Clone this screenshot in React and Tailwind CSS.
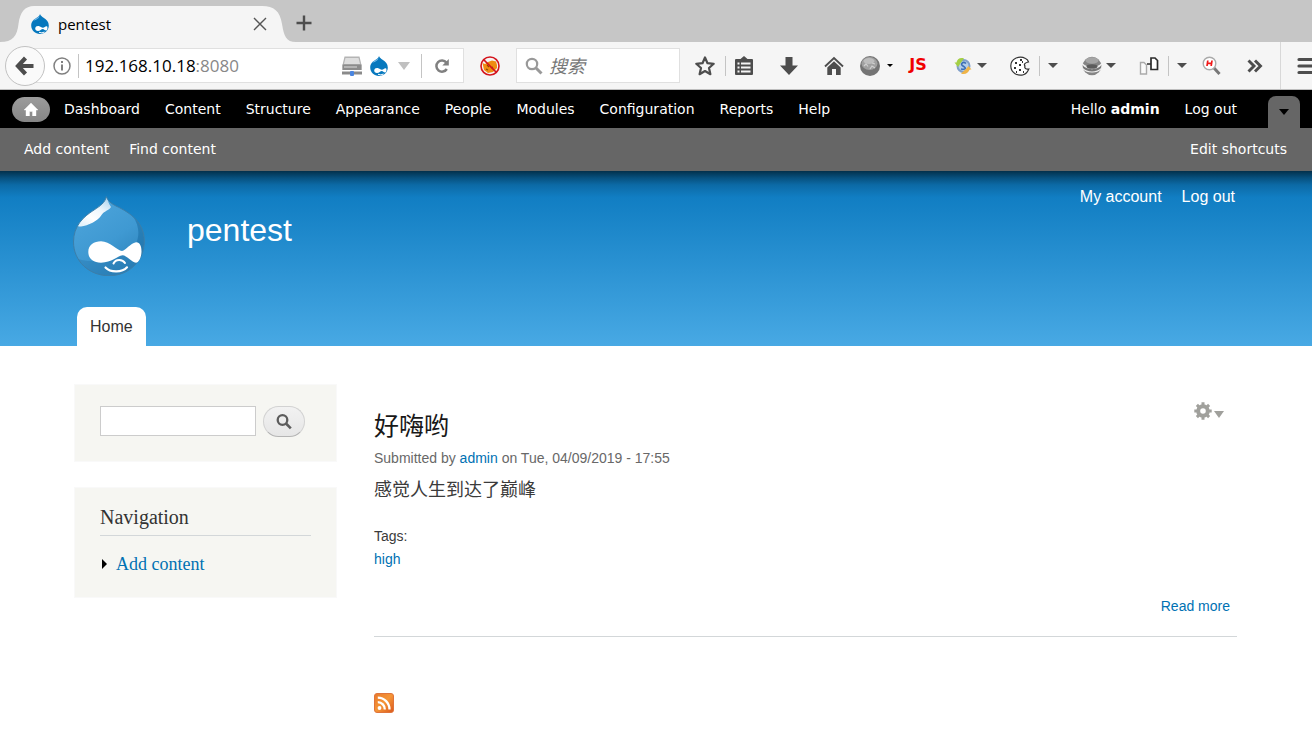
import React from "react";

function Favicon({ className }) {
  return (
    <svg viewBox="0 0 20 20" className={className} aria-hidden="true">
      <path d="M10 0C10.600 1.600 12 2.800 13.600 3.700C16.600 5.400 18.800 7.800 18.800 11.600C18.800 16.400 14.900 20 10 20C5.100 20 1.200 16.400 1.200 11.600C1.200 7.800 3.600 5.600 6.200 4C8 2.900 9.700 1.800 10 0Z" fill="#0678be" />
      <path d="M3 7C4.600 4.600 7.500 4.600 9.500 2C9 5 5.400 5.800 3 7Z" fill="#7cbdeb" />
      <path d="M5.200 14.600C5.200 12.400 7 11.800 8.600 12C10.600 12.300 11.700 13.800 13 13.700C14.500 13.500 15.200 12 16.800 12.200C18 12.500 17.600 16.400 16 16.600C14.600 16.600 14 15 12.800 15C11.200 15 10.400 17.100 8 17.100C6.300 17.100 5.200 16.100 5.200 14.600Z" fill="#fff" />
      <path d="M9 18.300Q12 19.600 14.500 18" stroke="#fff" strokeWidth="1" fill="none" />
    </svg>
  );
}

function SiteLogo() {
  return (
    <svg viewBox="0 0 72 80" className="h-20 w-[72px]" aria-hidden="true">
      <defs>
        <linearGradient id="drop" x1="0.200" y1="0" x2="0.800" y2="1">
          <stop offset="0.100" stopColor="#4ba3da" />
          <stop offset="0.550" stopColor="#3f99d2" />
          <stop offset="1" stopColor="#2a80b8" />
        </linearGradient>
        <linearGradient id="shine" x1="0.900" y1="0" x2="0.200" y2="1">
          <stop offset="0" stopColor="#a9d2ee" />
          <stop offset="0.400" stopColor="#eef7fd" />
          <stop offset="0.700" stopColor="#ffffff" />
          <stop offset="1" stopColor="#e3f2fb" />
        </linearGradient>
        <clipPath id="dropShape">
          <path d="M33.300 0.600C35 5 38 7.500 43 10C58 17 71.300 27 71.300 45C71.300 65 56 79.700 36 79.700C16 79.700 0.500 65 0.500 46C0.500 30 10 21 21 14C27 10 32 7 33.300 0.600Z" />
        </clipPath>
      </defs>
      <g clipPath="url(#dropShape)">
        <rect width="72" height="80" fill="url(#drop)" />
        <path d="M60 20C78 36 76 64 66 68C62 62 60 58 63 48C67 38 66 30 60 20Z" fill="#1c70a6" opacity="0.600" />
        <path d="M0 61C10 66 30 68 50 57L72 52V80H0Z" fill="#2172a9" opacity="0.350" />
        <path d="M33.500 1C30 9 14 14 8 21C4 26 3 31.500 8 30.500C15 29.500 25 25 28.500 19C31 15 36 14.500 38 11C36 8 35 5 33.500 1Z" fill="url(#shine)" />
      </g>
      <path d="M33.300 0.600C35 5 38 7.500 43 10C58 17 71.300 27 71.300 45C71.300 65 56 79.700 36 79.700C16 79.700 0.500 65 0.500 46C0.500 30 10 21 21 14C27 10 32 7 33.300 0.600Z" fill="none" stroke="#3d7ea8" strokeWidth="1" />
      <path d="M15.300 56C15.300 49 21 45.300 28 45.300C37 45.300 44 54.500 49 55C53 54.500 57 47.500 63 46.300C67 46 68.700 51 68.500 56C68.200 61 66 66.700 63 66.700C58 66 54 59.500 49.500 59.300C44 60 39 66.700 28 66.700C20 66.700 15.300 62.500 15.300 56Z" fill="#fff" />
      <path d="M40.500 67.500C42.500 62.800 49.500 62.800 52 67" fill="none" stroke="#fff" strokeWidth="2" strokeLinecap="round" />
      <path d="M32.500 71.500C37 76.500 49 77 54 71.300" fill="none" stroke="#fff" strokeWidth="2.200" strokeLinecap="round" />
    </svg>
  );
}

function Caret({ className }) {
  return (
    <svg viewBox="0 0 10 5" preserveAspectRatio="none" className={className} aria-hidden="true">
      <path d="M0 0H10L5 5Z" fill="currentColor" />
    </svg>
  );
}

function Tool({ label, className, children }) {
  return (
    <button type="button" aria-label={label} className={`shrink-0 ${className}`}>
      {children}
    </button>
  );
}

function Divider({ className }) {
  return <span className={`w-px shrink-0 bg-[#c4c4c4] ${className}`} />;
}

function TabStrip() {
  return (
    <div className="flex h-[42px] items-end bg-[#c6c6c6]">
      <div className="flex h-9 items-end">
        <svg viewBox="0 0 34 36" className="h-9 w-[34px] shrink-0" aria-hidden="true">
          <path d="M0 36C13 36 17 30 18.500 18C20 6 25 0 34 0V36Z" fill="#f5f5f5" />
        </svg>
        <div className="relative z-10 flex h-9 w-[228px] items-center bg-[#f5f5f5]">
          <Favicon className="-ml-1 size-5" />
          <span className="ml-2 flex-1 text-[15px] text-black">pentest</span>
          <button type="button" aria-label="Close tab" className="-mr-[5px]">
            <svg viewBox="0 0 14 14" className="size-[14px]" aria-hidden="true">
              <path d="M1 1L13 13M13 1L1 13" stroke="#555" strokeWidth="1.400" />
            </svg>
          </button>
        </div>
        <svg viewBox="0 0 34 36" className="h-9 w-[34px] shrink-0" aria-hidden="true">
          <path d="M0 0C12 0 18 5 20 18C22 30 24 36 34 36H0Z" fill="#f5f5f5" />
        </svg>
      </div>
      <button type="button" aria-label="New tab" className="mb-[11px]">
        <svg viewBox="0 0 16 16" className="size-4" aria-hidden="true">
          <path d="M8 0.500V15.500M0.500 8H15.500" stroke="#4d4d4d" strokeWidth="2.400" />
        </svg>
      </button>
    </div>
  );
}

function AddressBar() {
  return (
    <div className="flex min-w-0 flex-1 items-center pl-[5px]">
      <button type="button" aria-label="Back" className="relative z-10 flex size-10 shrink-0 items-center justify-center rounded-full border border-[#c2c2c2] bg-[#fafafa]">
        <svg viewBox="0 0 20 20" className="size-5" aria-hidden="true">
          <path d="M10.500 2L3 10L10.500 18M3.500 10H18.500" stroke="#4d4d4d" strokeWidth="4.200" fill="none" />
        </svg>
      </button>
      <div className="-ml-5 flex h-[35px] min-w-0 flex-1 items-center border border-[#e0e0e0] bg-white pl-[27px]">
        <svg viewBox="0 0 18 18" className="size-[18px] shrink-0" aria-hidden="true">
          <circle cx="9" cy="9" r="8" fill="none" stroke="#808080" strokeWidth="1.500" />
          <path d="M9 4V6M9 7.500V13.500" stroke="#808080" strokeWidth="2" />
        </svg>
        <Divider className="ml-[7px] h-6" />
        <div className="ml-[6px] min-w-0 flex-1 text-[17px] text-black">
          192.168.10.18<span className="text-[#888]">:8080</span>
        </div>
        <svg viewBox="0 0 20 20" className="size-5 shrink-0" aria-hidden="true">
          <path d="M2.500 0.500H17.500L19.500 9V14H0.500V9Z" fill="#b4b4b4" />
          <path d="M3.500 2H16.500L18 8H2Z" fill="#dedede" />
          <path d="M0.500 8.500H19.500V14H0.500Z" fill="#8c8c8c" />
          <path d="M2 11H15" stroke="#dcdcdc" />
          <path d="M0 17H20" stroke="#8a8a8a" strokeWidth="3" />
          <rect x="8" y="15" width="4" height="5" rx="1" fill="#4a85df" />
        </svg>
        <Favicon className="ml-[7px] size-5 shrink-0" />
        <Caret className="ml-[9px] h-2 w-3 shrink-0 text-[#c0c0c0]" />
        <Divider className="ml-[11px] h-6" />
        <button type="button" aria-label="Reload" className="ml-3 mr-[13px]">
          <svg viewBox="0 0 16 16" className="size-4" aria-hidden="true">
            <path d="M12.800 11A5.600 5.600 0 1 1 12.400 4.600" stroke="#808080" strokeWidth="2.500" fill="none" />
            <path d="M14.800 1V7.500H8.300Z" fill="#808080" />
          </svg>
        </button>
      </div>
    </div>
  );
}

function BrowserToolbar() {
  return (
    <div className="flex h-12 items-center overflow-hidden border-b border-[#bebebe] bg-[#f5f5f5] text-[#4d4d4d]">
      <AddressBar />
      <Tool label="Extension" className="mx-4">
        <svg viewBox="0 0 20 20" className="size-5" aria-hidden="true">
          <path d="M2.500 7L5 8L8 6L12 4.500L16 5.500L17 9V12L13 16L8 17L4 14Z" fill="#ef8c12" />
          <path d="M7 9L9 11M11 12L13 11M6 13L8 14" stroke="#8d4a08" strokeWidth="1.200" />
          <circle cx="10" cy="10" r="9" fill="none" stroke="#d4141c" strokeWidth="1.600" />
          <path d="M3.500 3.500L16.500 16.500" stroke="#d4141c" strokeWidth="1.700" />
        </svg>
      </Tool>
      <div className="flex h-[35px] w-[164px] shrink-0 items-center border border-[#e0e0e0] bg-white">
        <svg viewBox="0 0 18 18" className="ml-2 size-[18px] shrink-0" aria-hidden="true">
          <circle cx="7" cy="7" r="5.200" fill="none" stroke="#999" strokeWidth="2.200" />
          <path d="M11 11L16.500 16.500" stroke="#999" strokeWidth="3" />
        </svg>
        <input aria-label="Search the web" placeholder="搜索" className="ml-[6px] w-32 bg-transparent text-lg italic outline-none placeholder:text-[#777]" />
      </div>
      <Tool label="Bookmark" className="ml-[15px]">
        <svg viewBox="0 0 20 20" className="size-5" aria-hidden="true">
          <path d="M10 1.500L12.500 7.200L18.700 7.800L14 12L15.400 18.200L10 15L4.600 18.200L6 12L1.300 7.800L7.500 7.200Z" fill="none" stroke="currentColor" strokeWidth="2.200" strokeLinejoin="round" />
        </svg>
      </Tool>
      <Divider className="ml-[10px] h-5" />
      <Tool label="Library" className="ml-2">
        <svg viewBox="0 0 20 20" className="size-5" aria-hidden="true">
          <path d="M2 3H6.500L10 0L13.500 3H18Q19 3 19 4V18Q19 19 18 19H2Q1 19 1 18V4Q1 3 2 3Z" fill="currentColor" />
          <path d="M3.500 7.500H5.500M3.500 11.500H5.500M3.500 15.500H5.500M7 7.500H16.500M7 11.500H16.500M7 15.500H16.500" stroke="#f5f5f5" strokeWidth="2" />
        </svg>
      </Tool>
      <Tool label="Downloads" className="ml-[25px]">
        <svg viewBox="0 0 20 20" className="size-5" aria-hidden="true">
          <path d="M6.500 1H13.500V9.500H19L10 19L1 9.500H6.500Z" fill="currentColor" />
        </svg>
      </Tool>
      <Tool label="Home page" className="ml-[25px]">
        <svg viewBox="0 0 20 20" className="size-5" aria-hidden="true">
          <path d="M1 10.500L10 2L19 10.500" fill="none" stroke="currentColor" strokeWidth="1.900" />
          <path d="M10 5.300L16.700 11.500V19H12V13H8V19H3.300V11.500Z" fill="currentColor" />
        </svg>
      </Tool>
      <Tool label="Proxy" className="ml-4">
        <svg viewBox="0 0 20 20" className="size-5" aria-hidden="true">
          <circle cx="10" cy="10" r="10" fill="#747474" />
          <ellipse cx="9.500" cy="7.500" rx="8" ry="6.500" fill="#a0a0a0" />
          <ellipse cx="9" cy="5" rx="5.500" ry="3" fill="#bdbdbd" />
          <path d="M4 10L6 8L8 10.500M10 13L12 10L15 12M12 7L15 8" stroke="#cfcfcf" strokeWidth="1.200" fill="none" />
        </svg>
      </Tool>
      <Caret className="ml-[7px] h-[3px] w-[6px] shrink-0 text-black" />
      <Tool label="JavaScript" className="ml-[14px] w-[22px] pb-[2px] text-base font-bold leading-5 text-[#f00000]">
        <span className="font-['DejaVu_Sans',sans-serif]">JS</span>
      </Tool>
      <Tool label="Sync" className="ml-6">
        <svg viewBox="0 0 20 20" className="size-5" aria-hidden="true">
          <circle cx="10.500" cy="10" r="6" fill="#b3cde8" stroke="#7f9fc9" strokeWidth="2" />
          <path d="M13 7.500C10 5 6.500 8 10 10S13 14 8 13" fill="none" stroke="#3d6fb5" strokeWidth="1.600" />
          <path d="M11 2.500C7 1 4 3.500 3.500 6.500H1.500L5 11L8 6.500" fill="#a4cf45" />
          <path d="M8 17.500C12 19 15.500 17 16.500 13.500L18.500 13.500L15.500 10L12.500 13.500" fill="#efb447" />
        </svg>
      </Tool>
      <Caret className="ml-1 h-[5px] w-[10px] shrink-0" />
      <Tool label="Cookies" className="ml-[23px]">
        <svg viewBox="0 0 20 20" className="size-5" aria-hidden="true">
          <path d="M15.500 2.500C9 -1 0.700 3 0.800 10C0.900 17 8 20.500 13.500 18.700C17 17.500 18 15 18.800 13C16 13.500 14 12 15 10C13.500 8.500 15 6.500 18.500 6C18 4 17 3.200 15.500 2.500Z" fill="#fff" stroke="#333" strokeWidth="1.200" />
          <path d="M5 7H7M10 4H12M9 9H11M4 12H6M9 14H11M13 16H14M6 16H7M12 6H13" stroke="#333" strokeWidth="1.800" />
        </svg>
      </Tool>
      <Divider className="ml-[9px] h-5" />
      <Caret className="ml-2 h-[5px] w-[10px] shrink-0" />
      <Tool label="User agent" className="ml-6">
        <svg viewBox="0 0 20 20" className="size-5" aria-hidden="true">
          <circle cx="10" cy="10" r="9.300" fill="#858585" />
          <ellipse cx="10" cy="4.500" rx="6.500" ry="3.200" fill="#a5a5a5" />
          <path d="M0 6.500C3 10 6 11 10 11S17 10 20 6.500V13C17 15.500 14 16.500 10 16.500S3 15.500 0 13Z" fill="#f0f0f0" />
          <path d="M0.500 9C4 14.500 16 14.500 19.500 9L19 12C15 16.500 5 16.500 1 12Z" fill="#777" />
          <ellipse cx="10" cy="10.500" rx="5.500" ry="2.300" fill="#5c5c5c" />
        </svg>
      </Tool>
      <Caret className="ml-1 h-[5px] w-[10px] shrink-0" />
      <Tool label="Session" className="ml-[23px]">
        <svg viewBox="0 0 20 20" className="size-5" aria-hidden="true">
          <path d="M1.500 6.500H5L7.500 9V18H1.500Z" fill="#fafafa" stroke="#aaa" strokeWidth="1.400" />
          <path d="M12 2H16L18.500 4.500V13.500H12Z" fill="#fff" stroke="#2b2b2b" strokeWidth="1.700" />
          <path d="M8 8H12" stroke="#2b2b2b" strokeWidth="1.500" />
        </svg>
      </Tool>
      <Divider className="ml-[9px] h-5" />
      <Caret className="ml-2 h-[5px] w-[10px] shrink-0" />
      <Tool label="Header search" className="ml-[15px]">
        <svg viewBox="0 0 20 20" className="size-5" aria-hidden="true">
          <path d="M12 12L17.500 18" stroke="#777" strokeWidth="3" />
          <circle cx="7.500" cy="7.500" r="6.300" fill="#fff" stroke="#aaa" strokeWidth="1.400" />
          <path d="M5.800 4.500L5 10M10 4.500L9.200 10M5.500 7.300H9.500" stroke="#f01818" strokeWidth="1.700" />
        </svg>
      </Tool>
      <Tool label="More tools" className="ml-[25px]">
        <svg viewBox="0 0 16 14" className="h-[14px] w-4" aria-hidden="true">
          <path d="M1.500 1.500L7 7L1.500 12.500M8 1.500L13.500 7L8 12.500" fill="none" stroke="currentColor" strokeWidth="2.900" />
        </svg>
      </Tool>
      <Divider className="ml-[17px] h-full opacity-60" />
      <Tool label="Open menu" className="ml-4">
        <svg viewBox="0 0 15 18" className="h-[18px] w-[15px]" aria-hidden="true">
          <path d="M2 2.500H16M2 9H16M2 15.500H16" stroke="currentColor" strokeWidth="3.200" strokeLinecap="round" />
        </svg>
      </Tool>
    </div>
  );
}

const adminLinks = ["Dashboard", "Content", "Structure", "Appearance", "People", "Modules", "Configuration", "Reports", "Help"];

function AdminToolbar() {
  return (
    <div className="font-['DejaVu_Sans',Verdana,sans-serif] text-sm text-white">
      <nav className="flex h-[38px] items-center bg-black pl-3 pr-3">
        <a href="#" aria-label="Home" className="flex h-[25px] w-[38px] shrink-0 items-center justify-center rounded-full bg-linear-to-b from-[#9c9c9c] to-[#868686]">
          <svg viewBox="0 0 14 13" className="h-[13px] w-[14px]" aria-hidden="true">
            <path d="M7 0L14 7H12V13H8.500V8.500H5.500V13H2V7H0Z" fill="#fff" stroke="#fff" strokeWidth="0.400" />
          </svg>
        </a>
        <ul className="ml-[14px] flex gap-[25px]">
          {adminLinks.map((t) => (
            <li key={t}><a href="#">{t}</a></li>
          ))}
        </ul>
        <a href="#" className="ml-auto">Hello <strong>admin</strong></a>
        <a href="#" className="ml-[25px]">Log out</a>
        <button type="button" aria-label="Toggle shortcuts" className="ml-[31px] flex h-8 w-8 items-center justify-center self-end rounded-t-lg bg-[#666] text-black">
          <Caret className="h-[6px] w-[10px]" />
        </button>
      </nav>
      <div className="flex h-[43px] items-center gap-5 bg-[#666] pb-[2px] pl-6 pr-[25px]">
        <a href="#">Add content</a>
        <a href="#">Find content</a>
        <a href="#" className="ml-auto">Edit shortcuts</a>
      </div>
    </div>
  );
}

function SiteHeader() {
  return (
    <header className="flex h-[175px] flex-col justify-between bg-[linear-gradient(to_bottom,#03304b_0%,#07517f_4%,#0c6aa6_8%,#117ec3_15%,#48a9e4_100%)] pl-[73px] pr-[77px] font-['Liberation_Sans',Arial,sans-serif] text-white">
      <div className="flex items-start pt-[25px]">
        <SiteLogo />
        <h1 className="ml-[42px] mt-[14px] text-[32px] leading-10"><a href="#">pentest</a></h1>
        <nav className="-mt-[11px] ml-auto flex gap-5 text-base">
          <a href="#">My account</a>
          <a href="#">Log out</a>
        </nav>
      </div>
      <nav className="flex pl-1">
        <a href="#" className="flex h-[39px] items-center rounded-t-[10px] bg-white px-[13px] text-base text-[#333]">Home</a>
      </nav>
    </header>
  );
}

function Sidebar() {
  return (
    <aside className="flex w-[263px] shrink-0 flex-col gap-[25px] font-['Liberation_Serif',Georgia,serif]">
      <form className="flex h-[78px] items-start gap-[7px] border border-[#f9f9f9] bg-[#f6f6f2] pl-[25px] pt-[21px]" onSubmit={(e) => e.preventDefault()}>
        <input type="text" aria-label="Search" className="h-[30px] w-[156px] border border-[#ccc] bg-white px-1" />
        <button type="submit" aria-label="Search" className="flex h-[31px] w-[42px] items-center justify-center rounded-full border border-[#d2d2d2] border-b-[#b4b4b4] bg-linear-to-b from-[#f2f2f2] to-[#e6e6e6]">
          <svg viewBox="0 0 16 16" className="size-4" aria-hidden="true">
            <circle cx="6.500" cy="6" r="4.800" fill="none" stroke="#5c5c5c" strokeWidth="2.300" />
            <path d="M10 9.500L14.800 14.300" stroke="#5c5c5c" strokeWidth="2.600" />
          </svg>
        </button>
      </form>
      <section className="border border-[#f9f9f9] bg-[#f6f6f2] px-[25px] pb-[21px] pt-[17px]">
        <h2 className="border-b border-[#d3d7d9] pb-[5px] text-xl leading-[25px] text-[#333]">Navigation</h2>
        <div className="mt-4 flex items-center text-lg leading-6">
          <svg viewBox="0 0 5 10" className="ml-[2px] h-[10px] w-[5px]" aria-hidden="true">
            <path d="M0 0L5 5L0 10Z" fill="#000" />
          </svg>
          <a href="#" className="ml-[9px] text-[#0071b3]">Add content</a>
        </div>
      </section>
    </aside>
  );
}

function Article() {
  return (
    <main className="min-w-0 flex-1 font-['Liberation_Sans',Arial,'Noto_Sans_CJK_SC',sans-serif] text-sm text-[#3b3b3b]">
      <article className="border-b border-[#d3d7d9] pb-5 pt-6">
        <div className="flex items-start justify-between">
          <h2 className="text-[25px] leading-9 text-[#181818]"><a href="#">好嗨哟</a></h2>
          <button type="button" aria-label="Configure" className="-mt-[6px] mr-[13px] flex items-center gap-[2px] text-[#a0a09c]">
            <svg viewBox="0 0 18 18" className="size-[18px]" aria-hidden="true">
              <circle cx="9" cy="9" r="4.800" fill="none" stroke="currentColor" strokeWidth="4" />
              <path d="M9 0.300V4M9 14V17.700M0.300 9H4M14 9H17.700M2.900 2.900L5 5M13 13L15.100 15.100M2.900 15.100L5 13M13 5L15.100 2.900" stroke="currentColor" strokeWidth="3" />
            </svg>
            <Caret className="mt-[6px] h-[7px] w-[10px]" />
          </button>
        </div>
        <p className="mt-1 leading-5 text-[#686868]">Submitted by <a href="#" className="text-[#0071b3]">admin</a> on Tue, 04/09/2019 - 17:55</p>
        <p className="mt-2 text-lg leading-7">感觉人生到达了巅峰</p>
        <div className="mt-[21px] leading-[23px]">
          <h3>Tags:</h3>
          <a href="#" className="text-[#0071b3]">high</a>
        </div>
        <div className="mt-[25px] flex justify-end pr-[7px] leading-5">
          <a href="#" className="text-[#0071b3]">Read more</a>
        </div>
      </article>
      <a href="#" aria-label="Subscribe" className="mt-14 block size-5">
        <svg viewBox="0 0 20 20" className="size-5" aria-hidden="true">
          <defs>
            <linearGradient id="feed" x1="0" y1="0" x2="1" y2="1">
              <stop offset="0" stopColor="#e8792c" />
              <stop offset="0.500" stopColor="#f59537" />
              <stop offset="1" stopColor="#d9571c" />
            </linearGradient>
          </defs>
          <rect x="0.500" y="0.500" width="19" height="19" rx="2.500" fill="url(#feed)" stroke="#e0743a" />
          <circle cx="5.500" cy="15" r="1.900" fill="#fff" />
          <path d="M3.800 9.200A7 7 0 0 1 10.800 16.500M3.800 4.700A11.700 11.700 0 0 1 15.500 16.500" fill="none" stroke="#fff" strokeWidth="2.300" />
        </svg>
      </a>
    </main>
  );
}

export default function App() {
  return (
    <div className="min-h-screen bg-white font-['Open_Sans','Noto_Sans_CJK_SC',sans-serif]">
      <TabStrip />
      <BrowserToolbar />
      <AdminToolbar />
      <SiteHeader />
      <div className="flex items-start gap-[37px] pb-9 pl-[74px] pr-[75px] pt-[38px]">
        <Sidebar />
        <Article />
      </div>
    </div>
  );
}
